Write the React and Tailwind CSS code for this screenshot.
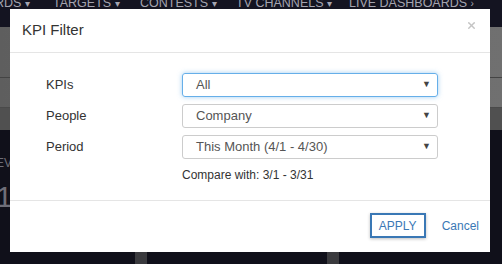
import { X } from 'lucide-react';

const NAV = [
  { label: 'RDS', x: 'w-[58px]', caret: '▾' },
  { label: 'TARGETS', x: 'w-[87px]', caret: '▾' },
  { label: 'CONTESTS', x: 'w-[96px]', caret: '▾' },
  { label: 'TV CHANNELS', x: 'w-[113px]', caret: '▾' },
  { label: 'LIVE DASHBOARDS', x: 'w-[150px]', caret: '›' },
];

const FIELDS = [
  { label: 'KPIs', value: 'All', focus: true },
  { label: 'People', value: 'Company' },
  { label: 'Period', value: 'This Month (4/1 - 4/30)' },
];

function Field({ label, value, focus }) {
  return (
    <div className="flex items-center h-[24px]">
      <div className="w-[136px] text-[13px] text-[#333]">{label}</div>
      <div
        className={`w-[256px] h-[24px] rounded-[3px] border flex items-center pl-[13px] pr-[6px] text-[13px] text-[#555]
          ${focus ? 'border-[#66afe9] shadow-[0_0_5px_rgba(102,175,233,0.6)]' : 'border-[#ccc]'}`}
      >
        <span className="flex-1">{value}</span>
        <span className="text-[9px] text-[#444]">▼</span>
      </div>
    </div>
  );
}

export default function App() {
  return (
    <div className="relative w-[502px] h-[264px] overflow-hidden bg-[#10101a] font-['Liberation_Sans',Arial,sans-serif]">
      {/* Page behind */}
      <div className="h-[27px] bg-[#141421] flex items-start text-[12.5px] leading-[14px] text-[#a4a4b0] -ml-[5px] overflow-hidden">
        {NAV.map(n => (
          <div key={n.label} className={`${n.x} flex-shrink-0 whitespace-nowrap -mt-[4px]`}>
            {n.label} <span className="text-[10px]">{n.caret}</span>
          </div>
        ))}
      </div>
      <div className="h-[103px] flex flex-col bg-gradient-to-r from-[#5e5e5e] via-[#686868] to-[#707070]">
        <div className="h-[51px] border-b border-[#444]" />
        <div className="h-[30px] border-b border-[#4a4a4a]" />
        <div className="flex-1 bg-[#505050]" />
      </div>
      <div className="flex flex-col pt-[24px] text-[#6e6e78]">
        <div className="text-[12px] -ml-[4px]">EVE</div>
        <div className="text-[30px] leading-none mt-[10px] -ml-[4px]">1</div>
      </div>
      <div className="absolute left-0 right-0 bottom-0 h-[12px] flex">
        <div className="w-[135px] bg-[#10101a]" />
        <div className="w-[12px] bg-[#3a3a3e]" />
        <div className="w-[180px] bg-[#10101a]" />
        <div className="w-[12px] bg-[#3a3a3e]" />
        <div className="flex-1 bg-[#10101a]" />
      </div>

      {/* Modal */}
      <div className="absolute left-[10px] top-[9px] w-[480px] h-[243px] bg-white flex flex-col">
        <div className="h-[44px] flex items-center justify-between pl-[12px] pr-[13px] border-b border-[#e5e5e5]">
          <span className="text-[15px] text-[#333]">KPI Filter</span>
          <X size={11} strokeWidth={3} className="text-[#c4c4c4] -mt-[10px]" />
        </div>
        <div className="h-[148px] flex flex-col gap-[7px] pl-[36px] pt-[20px] border-b border-[#e5e5e5]">
          {FIELDS.map(f => <Field key={f.label} {...f} />)}
          <div className="pl-[136px] text-[12px] text-[#333]">Compare with: 3/1 - 3/31</div>
        </div>
        <div className="flex-1 flex items-center justify-end gap-[16px] pr-[11px] pb-[2px]">
          <button className="w-[56px] h-[25px] border-2 border-[#3a78b5] text-[#3a78b5] text-[12px] shadow-[0_1px_3px_rgba(0,0,0,0.25)]">
            APPLY
          </button>
          <span className="text-[12px] text-[#3a78b5]">Cancel</span>
        </div>
      </div>
    </div>
  );
}
